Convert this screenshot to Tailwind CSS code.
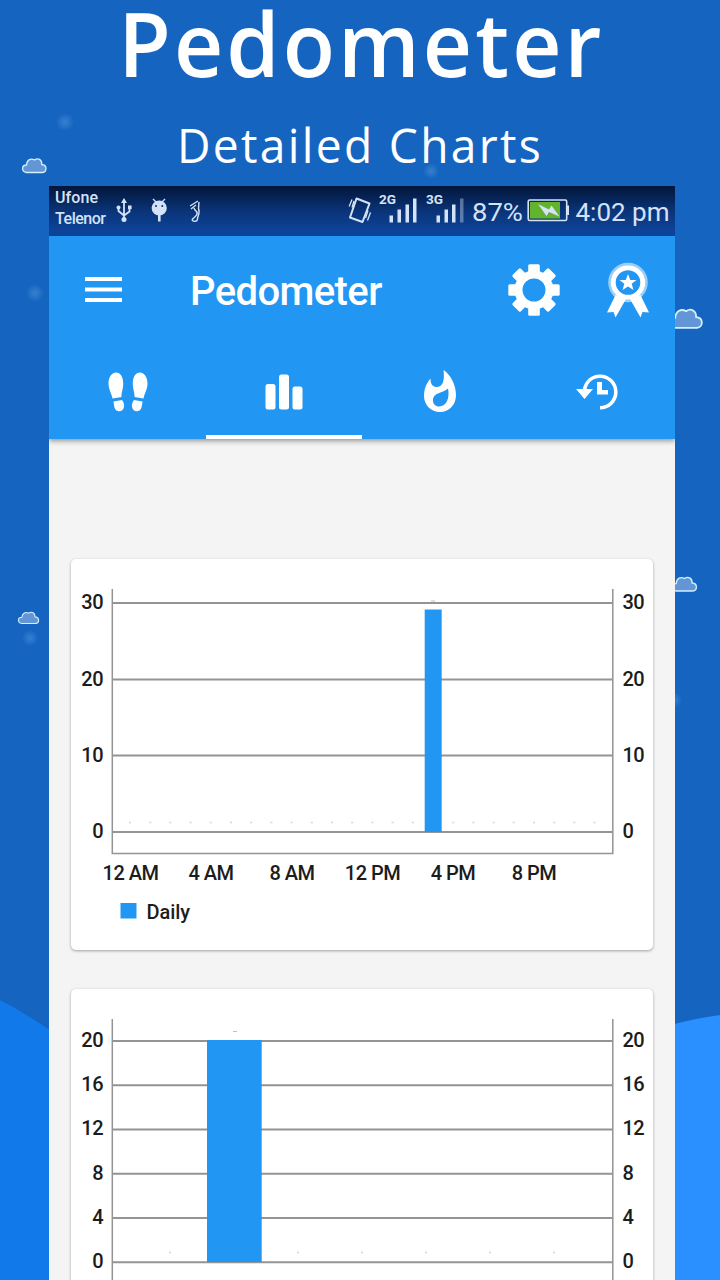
<!DOCTYPE html>
<html lang="en">
<head>
    <meta charset="UTF-8" />
    <meta name="viewport" content="width=device-width, initial-scale=1.0" />
    <title>Pedometer - Detailed Charts</title>
    <script src="https://cdn.jsdelivr.net/npm/@tailwindcss/browser@4"></script>
</head>
<body class="bg-[#1565c0]">
    <div class="relative w-[720px] h-[1280px] overflow-hidden bg-[#1565c0] flex flex-col">
        <!-- Backdrop: hills, clouds, soft dots -->
        <svg class="absolute inset-0" width="720" height="1280" viewBox="0 0 720 1280">
            <defs>
                <radialGradient id="dot">
                    <stop offset="0" stop-color="#5a9be0" stop-opacity=".5" />
                    <stop offset="1" stop-color="#5a9be0" stop-opacity="0" />
                </radialGradient>
                <path id="cloud" d="M4.500 14.500C-1 13.500-.5 7 4.500 7C5 1.500 9 0 12.500 2C16-.5 20 1.500 19.800 6.500C25.500 7 25 14 20.500 14.500Z" />
            </defs>
            <path d="M0 1000Q25 1013 60 1037V1280H0Z" fill="#1279ea" />
            <path d="M660 1028Q690 1019 720 1015V1280H660Z" fill="#2a8fff" />
            <g fill="url(#dot)">
                <circle cx="65" cy="122" r="9" />
                <circle cx="431" cy="171" r="8" />
                <circle cx="35" cy="293" r="9" />
                <circle cx="30" cy="638" r="8" />
                <circle cx="674" cy="700" r="8" />
            </g>
            <g fill="#6396d6" stroke="#d3f0fc" stroke-width="1.300">
                <use href="#cloud" x="22" y="158" />
                <use href="#cloud" transform="translate(669 308.500) scale(1.370 1.340)" />
                <use href="#cloud" transform="translate(671.500 576.500) scale(1.040 1)" />
                <use href="#cloud" transform="translate(18 611.500) scale(.86 .83)" />
            </g>
        </svg>

        <!-- Headline -->
        <header class="relative h-[186px] w-full shrink-0 font-['Open_Sans',sans-serif] text-white text-center whitespace-nowrap">
            <h1 class="h-[104px] pl-[3px] text-[89px] leading-[86px] font-semibold tracking-[3.200px] scale-x-[0.962]">Pedometer</h1>
            <p class="text-[48px] leading-[82px] tracking-[2.400px] scale-x-[0.962]">Detailed Charts</p>
        </header>

        <!-- Phone -->
        <main class="relative ml-[49px] w-[626px] h-[1094px] flex flex-col bg-[#f4f4f4] font-[Roboto,sans-serif] overflow-hidden">
            <!-- Status bar -->
            <div class="h-[50px] shrink-0 bg-linear-to-b from-[#03163a] via-[#0a3478] to-[#0d47a1] text-[#d5e2f7]">
                <svg width="626" height="50" viewBox="49 186 626 50" fill="currentColor">
                    <g font-size="16" font-weight="500">
                        <text x="55" y="203" textLength="43">Ufone</text>
                        <text x="55" y="224" textLength="51">Telenor</text>
                    </g>
                    <!-- usb -->
                    <g fill="none" stroke="currentColor" stroke-width="1.800">
                        <path d="M124 202V219M118.500 208V211L124 215.500L129.500 211.500V209" />
                    </g>
                    <path d="M124 198L127 203H121Z" />
                    <circle cx="118.500" cy="207.500" r="2" />
                    <path d="M128 205.500h3.600v3.600h-3.600z" />
                    <circle cx="124" cy="219.500" r="2.500" />
                    <!-- android head -->
                    <path d="M153 199L156 202M165 199L162 202" stroke="currentColor" stroke-width="1.400" />
                    <circle cx="159.200" cy="208" r="7.600" />
                    <path d="M158 214h2.600v7.500h-2.600z" />
                    <circle cx="156" cy="206" r="1" fill="#0a3270" />
                    <circle cx="162.300" cy="206" r="1" fill="#0a3270" />
                    <!-- foot -->
                    <path d="M194 208C195 212 199 211 196.500 215C195 218 191 219 192.500 220.500C194 222 197.500 221.500 197.500 219C197.500 216 200.500 213 198.500 208.500L199 202M190 206L198 201M191 209L196 205" fill="none" stroke="currentColor" stroke-width="1.400" />
                    <!-- vibrate -->
                    <g fill="none" stroke="currentColor" stroke-width="2">
                        <path d="M356.500 198.500L369.500 203.500L362.500 222L350 217.500Z" stroke-linejoin="round" />
                        <path d="M352 199.500L349.200 206.500M354 201L352 207.500M370.500 212.500L367.500 220.500M368 210.500L365.500 218" stroke-width="1.300" />
                    </g>
                    <!-- signals -->
                    <text x="379" y="203.500" font-size="12.500" font-weight="700" textLength="17" lengthAdjust="spacingAndGlyphs">2G</text>
                    <path d="M389.500 215.500h3.500v7h-3.500zM397.500 209.500h3.500v13h-3.500zM405.500 204.500h3.500v18h-3.500zM413 198.500h3.500v24h-3.500z" />
                    <text x="426" y="203.500" font-size="12.500" font-weight="700" textLength="17" lengthAdjust="spacingAndGlyphs">3G</text>
                    <path d="M436.500 215.500h3.500v7h-3.500zM444.500 209.500h3.500v13h-3.500zM452 204.500h3.500v18h-3.500z" />
                    <path d="M460 198.500h3.500v24h-3.500z" opacity=".4" />
                    <text x="472" y="221" font-size="26.500" textLength="51" lengthAdjust="spacingAndGlyphs">87%</text>
                    <!-- battery -->
                    <rect x="528.200" y="200" width="38.500" height="20.500" rx="1.500" fill="none" stroke="currentColor" stroke-width="1.600" />
                    <path d="M567 205.500h2v9.500h-2z" />
                    <path d="M530 202h30v16.500h-30z" fill="#62b32d" />
                    <path d="M538 204L549 209.500L551.500 205.500L559.500 216.500L549 212L546.500 216Z" />
                    <text x="575.500" y="221" font-size="26.500" textLength="94" lengthAdjust="spacingAndGlyphs">4:02 pm</text>
                </svg>
            </div>

            <!-- App bar -->
            <div class="relative z-10 h-[203px] shrink-0 bg-[#2196f3] text-white shadow-[0_2px_5px_rgba(0,0,0,0.4)]">
                <div class="h-[108px] flex items-center pl-[36px] pr-[25px]">
                    <svg width="37" height="26" viewBox="0 0 37 26" fill="currentColor">
                        <path d="M0 0h37v4H0zM0 10.500h37v4H0zM0 21h37v4H0z" />
                    </svg>
                    <h2 class="ml-[68px] mt-1 text-[40px] leading-none font-medium tracking-[-0.600px]">Pedometer</h2>
                    <div class="ml-auto flex items-center gap-[45px]">
                        <svg width="54" height="54" viewBox="-27 -27 54 54" fill="currentColor">
                            <defs><rect id="tooth" x="-5.800" y="-25.700" width="11.600" height="12" rx="1.500" /></defs>
                            <use href="#tooth" />
                            <use href="#tooth" transform="rotate(45)" />
                            <use href="#tooth" transform="rotate(90)" />
                            <use href="#tooth" transform="rotate(135)" />
                            <use href="#tooth" transform="rotate(180)" />
                            <use href="#tooth" transform="rotate(225)" />
                            <use href="#tooth" transform="rotate(270)" />
                            <use href="#tooth" transform="rotate(315)" />
                            <circle r="15.500" fill="none" stroke="currentColor" stroke-width="8" />
                        </svg>
                        <svg width="44" height="56" viewBox="0 0 44 56" fill="currentColor">
                            <circle cx="22" cy="20.500" r="18.500" fill="none" stroke="#9bcffa" stroke-width="2.500" />
                            <circle cx="22" cy="20.500" r="14.800" fill="none" stroke="currentColor" stroke-width="5" />
                            <path d="M22 12L24.300 18H30.500L25.700 21.800L27.500 28L22 24.400L16.500 28L18.300 21.800L13.500 18H19.700Z" />
                            <path d="M9.500 33L1 50.500L7.500 50L9.500 55.500L20 37ZM34.500 33L43 50.500L36.500 50L34.500 55.500L24 37Z" />
                        </svg>
                    </div>
                </div>
                <!-- Tabs -->
                <div class="grid grid-cols-4 h-[95px]">
                    <div class="flex justify-center pt-[28px] pl-px">
                        <svg width="40" height="40" viewBox="0 0 40 40" fill="currentColor">
                            <g id="shoe">
                                <path d="M8 .5C3.500.5.500 5.500.500 11.500C.500 17.500 3.500 21 4.500 26.500L13.500 25C13 21.500 15.200 17.500 15.200 11.500C15.200 5 12.500.500 8 .5Z" />
                                <path d="M5.500 29.500L14 28C15.500 30 16.500 32.500 16 35C15.500 38 13 39.500 10.500 39.200C6.500 38.800 6 34 5.500 29.500Z" />
                            </g>
                            <use href="#shoe" transform="translate(40 0) scale(-1 1)" />
                        </svg>
                    </div>
                    <div class="relative flex justify-center pt-[30px]">
                        <svg width="38" height="36" viewBox="0 0 38 36" fill="currentColor">
                            <rect x=".5" y="10" width="10" height="25.500" rx="2.500" />
                            <rect x="14" y=".5" width="10" height="35" rx="2.500" />
                            <rect x="27.500" y="12.500" width="10" height="23" rx="2.500" />
                        </svg>
                        <span class="absolute left-0 bottom-0 w-full h-[4px] bg-white"></span>
                    </div>
                    <div class="flex justify-center pt-[26px]">
                        <svg width="32" height="42" viewBox="0 0 32 42" fill="currentColor">
                            <path fill-rule="evenodd" d="M19.500 0C27 5 32 15.500 32 25C32 35 25 42 16 42C7 42 0 35 0 26C0 19 2.500 13 6.500 8.500C6.500 13 8 17 12.500 17C18.500 17 21 11 19.500 0ZM24 18.500C19 23.500 9 22 9 30.500C9 34 11.500 36.500 15 36.500C22.500 36.500 26 27.500 24 18.500Z" />
                        </svg>
                    </div>
                    <div class="flex justify-center pt-[30px]">
                        <svg width="42" height="37" viewBox="0 0 42 37" fill="currentColor">
                            <path d="M8.500 15.500C10.500 7 16.500 2.200 24 2.200A15.800 15.800 0 0 1 24 33.800" fill="none" stroke="currentColor" stroke-width="3.600" />
                            <path d="M0 15H17L8.500 25ZM21 8h5v8h6v4.500H21z" />
                        </svg>
                    </div>
                </div>
            </div>

            <!-- Chart cards -->
            <section class="flex flex-col gap-[39px] px-[22px] pt-[120px]">
                <div class="w-[582px] h-[391px] shrink-0 rounded-[5px] bg-white shadow-[0_1px_3px_rgba(0,0,0,0.35)]">
                    <svg class="tracking-[-0.500px]" width="582" height="391" viewBox="71 559 582 391" font-size="20" font-weight="500" fill="#1c1c1c">
                        <g stroke="#949494" stroke-width="2" fill="none">
                            <path d="M112 603H613M112 679.500H613M112 755.500H613M112 832H613" />
                            <path d="M112.300 589V853.500H612.800V589" stroke-width="1.500" />
                            <path d="M129 822.500H605" stroke="#d5d5d5" stroke-width="1.300" stroke-dasharray="2 18.200" />
                            <path d="M431 601h4" stroke="#c0c0c0" stroke-width="1" />
                        </g>
                        <path d="M424.700 609.500h17V832h-17z" fill="#2196f3" />
                        <g text-anchor="end">
                            <text x="103" y="609">30</text>
                            <text x="103" y="685.500">20</text>
                            <text x="103" y="761.500">10</text>
                            <text x="103" y="838">0</text>
                        </g>
                        <text x="622.500" y="609">30</text>
                        <text x="622.500" y="685.500">20</text>
                        <text x="622.500" y="761.500">10</text>
                        <text x="622.500" y="838">0</text>
                        <g text-anchor="middle">
                            <text x="130.500" y="879.500">12 AM</text>
                            <text x="211" y="879.500">4 AM</text>
                            <text x="292" y="879.500">8 AM</text>
                            <text x="372.500" y="879.500">12 PM</text>
                            <text x="453" y="879.500">4 PM</text>
                            <text x="534" y="879.500">8 PM</text>
                        </g>
                        <path d="M120.500 903h16v15.500h-16z" fill="#2196f3" />
                        <text class="tracking-[-0.100px]" x="146.500" y="918.500">Daily</text>
                    </svg>
                </div>

                <div class="w-[582px] h-[391px] shrink-0 rounded-[5px] bg-white shadow-[0_1px_3px_rgba(0,0,0,0.35)]">
                    <svg class="tracking-[-0.500px]" width="582" height="391" viewBox="71 989 582 391" font-size="20" font-weight="500" fill="#1c1c1c">
                        <g stroke="#949494" stroke-width="2" fill="none">
                            <path d="M112 1041H613M112 1085.300H613M112 1129.500H613M112 1173.700H613M112 1218H613M112 1262.300H613" />
                            <path d="M112.300 1019V1300M612.800 1019V1300" stroke-width="1.500" />
                            <path d="M169 1252.500H560" stroke="#d5d5d5" stroke-width="1.300" stroke-dasharray="2 62" />
                            <path d="M233 1031.500h4" stroke="#c0c0c0" stroke-width="1" />
                        </g>
                        <path d="M207 1040h54.700v222H207z" fill="#2196f3" />
                        <g text-anchor="end">
                            <text x="103" y="1046.500">20</text>
                            <text x="103" y="1091">16</text>
                            <text x="103" y="1135">12</text>
                            <text x="103" y="1179.500">8</text>
                            <text x="103" y="1223.700">4</text>
                            <text x="103" y="1268">0</text>
                        </g>
                        <text x="622.500" y="1046.500">20</text>
                        <text x="622.500" y="1091">16</text>
                        <text x="622.500" y="1135">12</text>
                        <text x="622.500" y="1179.500">8</text>
                        <text x="622.500" y="1223.700">4</text>
                        <text x="622.500" y="1268">0</text>
                    </svg>
                </div>
            </section>
        </main>
    </div>
</body>
</html>
